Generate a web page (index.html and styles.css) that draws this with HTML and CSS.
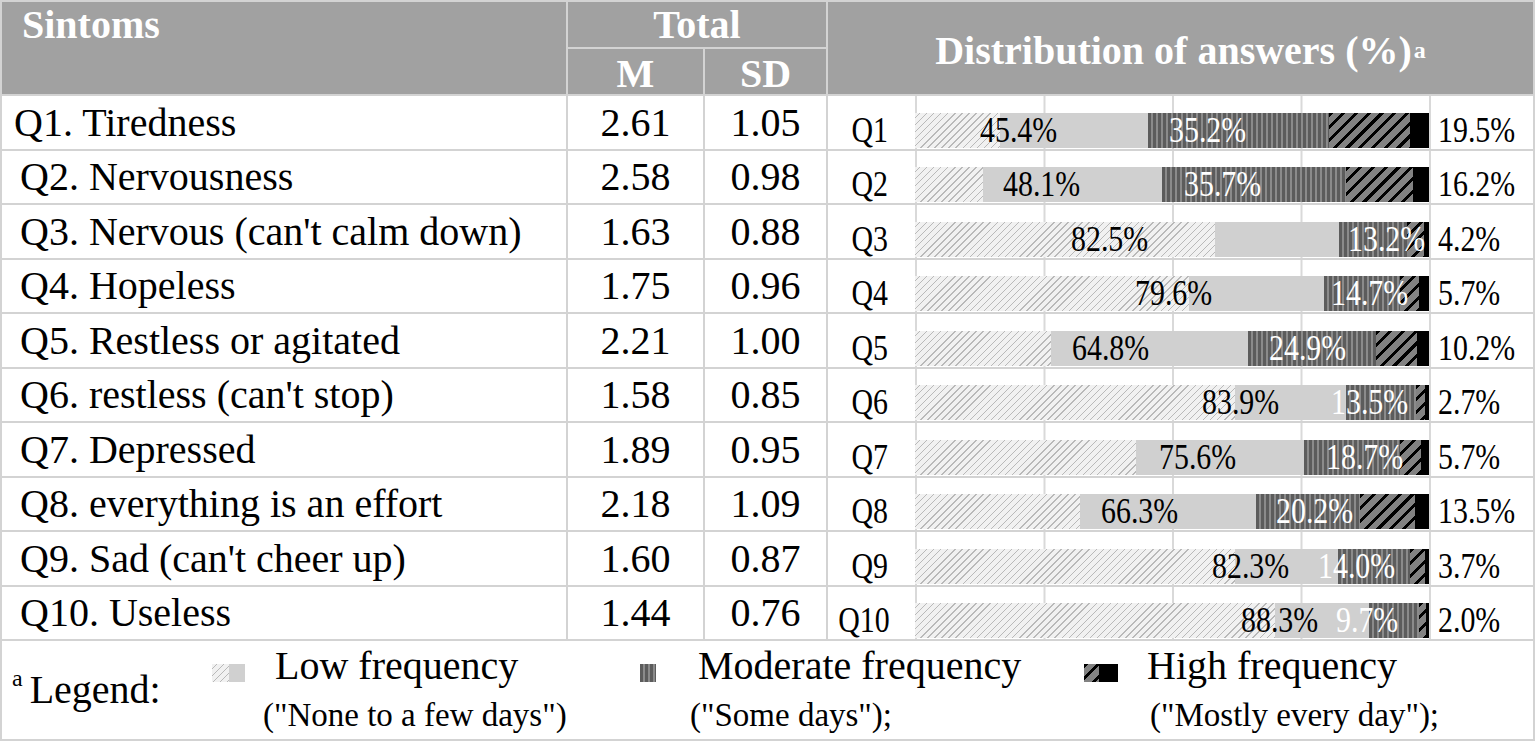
FILE: index.html
```html
<!DOCTYPE html>
<html>
<head>
<meta charset="utf-8">
<link rel="stylesheet" href="styles.css">
</head>
<body>
<div class="sheet">
  <div class="h h-sym">Sintoms</div>
  <div class="h h-total">Total</div>
  <div class="h h-m">M</div>
  <div class="h h-sd">SD</div>
  <div class="h h-dist">Distribution of answers (%)<sup>a</sup></div>

  <div class="c name first">Q1. Tiredness</div><div class="c num">2.61</div><div class="c num">1.05</div>
  <div class="c chart"><span class="qlab">Q1</span><div class="plot"><div class="bar"><i class="hatch" style="width:16.5%"></i><i class="low" style="width:28.9%"></i><i class="mod" style="width:35.2%"></i><i class="diag" style="width:15.8%"></i><i class="blk" style="width:3.6%"></i></div><span class="lbl" style="left:65px">45.4%</span><span class="lbl white" style="left:254px">35.2%</span></div><span class="rlab">19.5%</span></div>

  <div class="c name">Q2. Nervousness</div><div class="c num">2.58</div><div class="c num">0.98</div>
  <div class="c chart"><span class="qlab">Q2</span><div class="plot"><div class="bar"><i class="hatch" style="width:13.2%"></i><i class="low" style="width:34.9%"></i><i class="mod" style="width:35.7%"></i><i class="diag" style="width:13.1%"></i><i class="blk" style="width:3.1%"></i></div><span class="lbl" style="left:88px">48.1%</span><span class="lbl white" style="left:269px">35.7%</span></div><span class="rlab">16.2%</span></div>

  <div class="c name">Q3. Nervous (can't calm down)</div><div class="c num">1.63</div><div class="c num">0.88</div>
  <div class="c chart"><span class="qlab">Q3</span><div class="plot"><div class="bar"><i class="hatch" style="width:58.4%"></i><i class="low" style="width:24.1%"></i><i class="mod" style="width:13.2%"></i><i class="diag" style="width:3.4%"></i><i class="blk" style="width:0.9%"></i></div><span class="lbl" style="left:156px">82.5%</span><span class="lbl white" style="left:433px">13.2%</span></div><span class="rlab">4.2%</span></div>

  <div class="c name">Q4. Hopeless</div><div class="c num">1.75</div><div class="c num">0.96</div>
  <div class="c chart"><span class="qlab">Q4</span><div class="plot"><div class="bar"><i class="hatch" style="width:53.3%"></i><i class="low" style="width:26.3%"></i><i class="mod" style="width:14.7%"></i><i class="diag" style="width:3.7%"></i><i class="blk" style="width:2.0%"></i></div><span class="lbl" style="left:220px">79.6%</span><span class="lbl white" style="left:416px">14.7%</span></div><span class="rlab">5.7%</span></div>

  <div class="c name">Q5. Restless or agitated</div><div class="c num">2.21</div><div class="c num">1.00</div>
  <div class="c chart"><span class="qlab">Q5</span><div class="plot"><div class="bar"><i class="hatch" style="width:26.5%"></i><i class="low" style="width:38.3%"></i><i class="mod" style="width:24.9%"></i><i class="diag" style="width:7.9%"></i><i class="blk" style="width:2.4%"></i></div><span class="lbl" style="left:157px">64.8%</span><span class="lbl white" style="left:354px">24.9%</span></div><span class="rlab">10.2%</span></div>

  <div class="c name">Q6. restless (can't stop)</div><div class="c num">1.58</div><div class="c num">0.85</div>
  <div class="c chart"><span class="qlab">Q6</span><div class="plot"><div class="bar"><i class="hatch" style="width:62.3%"></i><i class="low" style="width:21.6%"></i><i class="mod" style="width:13.5%"></i><i class="diag" style="width:1.8%"></i><i class="blk" style="width:0.8%"></i></div><span class="lbl" style="left:287px">83.9%</span><span class="lbl white" style="left:416px">13.5%</span></div><span class="rlab">2.7%</span></div>

  <div class="c name">Q7. Depressed</div><div class="c num">1.89</div><div class="c num">0.95</div>
  <div class="c chart"><span class="qlab">Q7</span><div class="plot"><div class="bar"><i class="hatch" style="width:43.0%"></i><i class="low" style="width:32.6%"></i><i class="mod" style="width:18.7%"></i><i class="diag" style="width:4.1%"></i><i class="blk" style="width:1.6%"></i></div><span class="lbl" style="left:244px">75.6%</span><span class="lbl white" style="left:411px">18.7%</span></div><span class="rlab">5.7%</span></div>

  <div class="c name">Q8. everything is an effort</div><div class="c num">2.18</div><div class="c num">1.09</div>
  <div class="c chart"><span class="qlab">Q8</span><div class="plot"><div class="bar"><i class="hatch" style="width:32.1%"></i><i class="low" style="width:34.2%"></i><i class="mod" style="width:20.2%"></i><i class="diag" style="width:10.8%"></i><i class="blk" style="width:2.7%"></i></div><span class="lbl" style="left:186px">66.3%</span><span class="lbl white" style="left:361px">20.2%</span></div><span class="rlab">13.5%</span></div>

  <div class="c name">Q9. Sad (can't cheer up)</div><div class="c num">1.60</div><div class="c num">0.87</div>
  <div class="c chart"><span class="qlab">Q9</span><div class="plot"><div class="bar"><i class="hatch" style="width:62.3%"></i><i class="low" style="width:20.0%"></i><i class="mod" style="width:14.0%"></i><i class="diag" style="width:2.9%"></i><i class="blk" style="width:0.8%"></i></div><span class="lbl" style="left:297px">82.3%</span><span class="lbl white" style="left:403px">14.0%</span></div><span class="rlab">3.7%</span></div>

  <div class="c name">Q10. Useless</div><div class="c num">1.44</div><div class="c num">0.76</div>
  <div class="c chart"><span class="qlab">Q10</span><div class="plot"><div class="bar"><i class="hatch" style="width:70.0%"></i><i class="low" style="width:18.3%"></i><i class="mod" style="width:9.7%"></i><i class="diag" style="width:1.4%"></i><i class="blk" style="width:0.6%"></i></div><span class="lbl" style="left:326px">88.3%</span><span class="lbl white" style="left:421px">9.7%</span></div><span class="rlab">2.0%</span></div>

  <div class="legend">
    <div class="lg-title"><sup>a</sup>Legend:</div>
    <div class="lg-item lg-low">
      <div class="lg-row"><span class="sw sw-low"><i class="hatch"></i><i class="low"></i></span><span class="lg-name">Low frequency</span></div>
      <div class="lg-sub">("None to a few days")</div>
    </div>
    <div class="lg-item lg-mod">
      <div class="lg-row"><span class="sw sw-mod"><i class="mod"></i></span><span class="lg-name">Moderate frequency</span></div>
      <div class="lg-sub">("Some days");</div>
    </div>
    <div class="lg-item lg-high">
      <div class="lg-row"><span class="sw sw-high"><i class="diag"></i><i class="blk"></i></span><span class="lg-name">High frequency</span></div>
      <div class="lg-sub">("Mostly every day");</div>
    </div>
  </div>
</div>
</body>
</html>
```
FILE: styles.css
```css
* { box-sizing: border-box; }
html, body { margin: 0; padding: 0; background: #fff; }
body { width: 1535px; height: 741px; overflow: hidden; }

.sheet {
  width: 1535px;
  height: 741px;
  display: grid;
  grid-template-columns: 564px 135px 121px 705px;
  grid-template-rows: 45px 45px repeat(10, 52.5px) 98px;
  gap: 2px;
  padding: 2px;
  background: #d3d3d3;
  font-family: "Liberation Serif", "Times New Roman", serif;
  color: #000;
}

.h {
  background: #a1a1a1;
  color: #fff;
  font-weight: bold;
  font-size: 40px;
  line-height: 45px;
}
.h-sym { grid-column: 1; grid-row: 1 / 3; padding-left: 20px; }
.h-total { grid-column: 2 / 4; grid-row: 1; text-align: center; }
.h-m { grid-column: 2; grid-row: 2; text-align: center; padding-top: 2px; }
.h-sd { grid-column: 3; grid-row: 2; text-align: center; padding-top: 2px; }
.h-dist {
  grid-column: 4;
  grid-row: 1 / 3;
  display: flex;
  align-items: center;
  justify-content: center;
  padding-top: 4px;
}
.h-dist sup { font-size: 24px; line-height: 0; vertical-align: 18px; margin-left: 2px; }

.c {
  background: #fff;
  font-size: 40px;
  display: flex;
  align-items: center;
  white-space: nowrap;
}
.name { padding-left: 18px; }
.name.first { padding-left: 12px; }
.num { justify-content: center; }

.chart { align-items: stretch; font-size: 36px; }
.qlab {
  width: 60px;
  text-align: right;
  align-self: flex-end;
  height: 35px;
  line-height: 35px;
  margin-bottom: 1px;
  transform: scaleX(0.83);
  transform-origin: right center;
}
.plot {
  position: relative;
  width: 516px;
  margin-left: 27px;
  display: flex;
  flex-direction: column;
  justify-content: flex-end;
  padding-right: 2px;
  background-image:
    linear-gradient(90deg, #d9d9d9 0 2px, transparent 2px),
    linear-gradient(90deg, #d9d9d9 0 2px, transparent 2px);
  background-size: 128.5px 100%, 2px 100%;
  background-repeat: repeat-x, no-repeat;
  background-position: 0 0, 514px 0;
}
.bar {
  display: flex;
  height: 35px;
  width: 514px;
  margin-bottom: 1px;
  overflow: hidden;
}
.bar i { display: block; height: 100%; flex: none; }

.hatch {
  background: repeating-linear-gradient(135deg, #f1f1f1 0 3px, #b9b9b9 3px 4px, #f1f1f1 4px 5px);
}
.low { background: #d0d0d0; }
.mod {
  background: repeating-linear-gradient(90deg, #5c5c5c 0 3px, #8b8b8b 3px 5px);
}
.diag {
  background: repeating-linear-gradient(135deg, #000 0 3px, #828282 3px 9px);
}
.blk { background: #000; }

.lbl {
  position: absolute;
  bottom: 1px;
  height: 35px;
  line-height: 35px;
  color: #000;
  white-space: nowrap;
  transform: scaleX(0.83);
  transform-origin: left center;
}
.lbl.white { color: #fff; }
.rlab {
  align-self: flex-end;
  height: 35px;
  line-height: 35px;
  margin-bottom: 1px;
  margin-left: 7px;
  transform: scaleX(0.83);
  transform-origin: left center;
}

.legend {
  grid-column: 1 / -1;
  background: #fff;
  display: grid;
  grid-template-columns: 200px 428px 444px 1fr;
  padding-left: 10px;
  padding-top: 5px;
  align-items: start;
}
.lg-title {
  font-size: 40px;
  line-height: 40px;
  margin-top: 24px;
  white-space: nowrap;
}
.lg-title sup { font-size: 24px; line-height: 0; vertical-align: 17px; margin-right: 7px; }
.lg-row { display: flex; align-items: flex-start; }
.lg-name { font-size: 40px; line-height: 40px; white-space: nowrap; }
.lg-sub { font-size: 33px; line-height: 36px; margin-top: 11px; white-space: nowrap; }
.sw { display: flex; height: 18px; margin-top: 18px; }
.sw i { display: block; height: 100%; }
.sw-low { width: 33px; margin-right: 30px; }
.sw-low i { width: 50%; }
.sw-mod { width: 16px; margin-right: 42px; }
.sw-mod i { width: 100%; }
.sw-high { width: 34px; margin-right: 29px; }
.sw-high i.diag { width: 45%; }
.sw-high i.blk { width: 55%; }
.lg-low .lg-sub { margin-left: 51px; }
.lg-mod .lg-sub { margin-left: 50px; }
.lg-high .lg-sub { margin-left: 66px; }
```
